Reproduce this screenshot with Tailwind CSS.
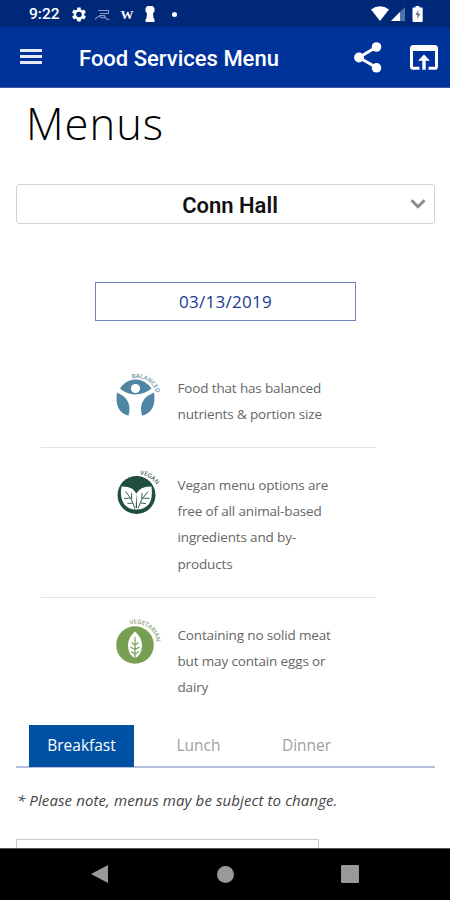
<!DOCTYPE html>
<html lang="en">
<head>
<meta charset="utf-8">
<title>Food Services Menu</title>
<script src="https://cdn.jsdelivr.net/npm/@tailwindcss/browser@4"></script>
</head>
<body class="bg-white">
<div class="w-[450px] h-[900px] flex flex-col overflow-hidden bg-white font-['Open_Sans',sans-serif]">
  <!-- status bar -->
  <div class="h-[27px] shrink-0 bg-[#002878] flex items-center text-white font-['Roboto',sans-serif] pl-[29px] pr-[27px]">
    <span class="w-[43px] text-[15.500px] font-medium leading-none mt-[3px]">9:22</span>
    <svg class="w-[14px] h-[15px] mt-px" viewBox="2 2 20 20" fill="#fff"><path d="M19.4 13c.04-.3.06-.6.06-1s-.02-.7-.07-1l2.1-1.6c.2-.15.24-.4.12-.62l-2-3.46c-.12-.22-.37-.3-.6-.22l-2.48 1c-.52-.4-1.08-.73-1.7-.98l-.37-2.65A.5.5 0 0 0 14 2h-4c-.24 0-.45.18-.5.42l-.37 2.65c-.6.25-1.17.6-1.7.98l-2.48-1c-.23-.08-.48 0-.6.22l-2 3.46c-.13.22-.08.47.1.62L4.6 11a8 8 0 0 0 0 2l-2.1 1.6c-.2.15-.25.4-.13.62l2 3.46c.12.22.38.3.6.22l2.5-1c.5.4 1.07.73 1.68.98l.38 2.65c.04.24.25.42.5.42h4c.25 0 .46-.18.5-.42l.36-2.65c.6-.25 1.18-.6 1.7-.98l2.48 1c.22.08.48 0 .6-.22l2-3.46c.12-.22.07-.47-.12-.62zM12 16a4 4 0 1 1 0-8 4 4 0 0 1 0 8z"/></svg>
    <svg class="w-4 h-3 ml-[9px] mt-0.5" viewBox="0 0 16 12" fill="none" stroke="#8d9cc1" stroke-width="1.1"><path d="M3 1.500h10.500v3H5M0 10.500c2-3 4-3.500 5.500-2.500s3 1.500 5-.5M9.500 6c0 3 1 4.500 5 4.500M4 6.500h5"/></svg>
    <span class="w-[14px] ml-[9px] text-center text-[13px] leading-none font-bold font-['Liberation_Serif',serif] mt-0.5">W</span>
    <svg class="w-[10px] h-4 ml-[11px] mt-px" viewBox="0 0 10 16" fill="#fff"><path d="M2.500 0h5L9.500 2v3.500L8 7.500l.5 4.500 1 1.500V16H.5v-2.500l1-1.500L2 7.500.5 5.500V2z"/></svg>
    <span class="w-[5px] h-[5px] ml-[17px] mt-px rounded-full bg-white"></span>
    <svg class="w-[18px] h-[15px] ml-auto" viewBox="0 0 18 15" fill="#fff"><path d="M0 3.500Q9-3 18 3.500L9 15z"/></svg>
    <svg class="w-[14px] h-[14px] ml-[2px] mt-px" viewBox="0 0 14 14"><path d="M14 0v14H0z" fill="#4d75a9"/><path d="M9 5v9H0z" fill="#fff"/></svg>
    <svg class="w-[11px] h-4 ml-[7px]" viewBox="0 0 11 16"><path d="M3.500 0h4v1.500H10a.7.700 0 0 1 .7.700V15a1 1 0 0 1-1 1H1.500a1 1 0 0 1-1-1V2.200a.7.700 0 0 1 .7-.7h2.300z" fill="#fff"/><path d="M6.500 4L3.300 9h2v4l3-5.200H6.300z" fill="#65738f"/></svg>
  </div>
  <!-- app bar -->
  <header class="h-[61px] shrink-0 bg-[#003399] border-b border-[#3a58a4] flex items-center pl-5 pr-3 text-white">
    <div class="w-[22px] h-[15px] flex flex-col justify-between -mt-px">
      <span class="h-[3px] bg-[#e6eaf8]"></span><span class="h-[3px] bg-[#e6eaf8]"></span><span class="h-[3px] bg-[#e6eaf8]"></span>
    </div>
    <h2 class="ml-[37px] mt-[3px] text-[22px] leading-none font-medium whitespace-nowrap font-['Roboto',sans-serif]">Food Services Menu</h2>
    <svg class="w-[28px] h-[31px] ml-auto mr-[28px]" viewBox="0 0 28 31" fill="#fff"><path d="M22.500 5L5 15.500l17.500 10" fill="none" stroke="#fff" stroke-width="3"/><circle cx="22.500" cy="5" r="4.800"/><circle cx="5" cy="15.500" r="4.900"/><circle cx="22.500" cy="25.800" r="4.800"/></svg>
    <svg class="w-[28px] h-[25px]" viewBox="0 0 28 25"><path d="M9.500 23.300H3a1.500 1.500 0 0 1-1.500-1.500V3A1.500 1.500 0 0 1 3 1.500h22A1.500 1.500 0 0 1 26.500 3v18.800a1.500 1.500 0 0 1-1.500 1.500h-6.500" fill="none" stroke="#fff" stroke-width="3"/><path d="M1.500 1.500h25v4.500h-25z" fill="#fff"/><path d="M14 9.500l6 6.300h-4.300v9h-3.400v-9H8z" fill="#fff"/></svg>
  </header>
  <!-- page content -->
  <main class="h-[760px] shrink-0 overflow-hidden px-4">
    <h1 class="ml-[10px] mt-[6px] h-[60px] leading-[60px] text-[43.500px] font-light tracking-[1px] text-black">Menus</h1>
    <div class="mt-[30px] w-[419px] h-10 border border-[#d2d2d2] rounded-[3px] flex items-center">
      <span class="w-10"></span>
      <span class="flex-1 text-center text-[22px] leading-none font-semibold text-[#111] font-['Roboto',sans-serif] ml-[13px] mt-[3px]">Conn Hall</span>
      <svg class="w-[16px] h-[10px] ml-5 mr-[8px] mb-px" viewBox="0 0 16 10" fill="none" stroke="#8c8c8c" stroke-width="3"><path d="M1.500 1.200L8 7.700l6.500-6.500"/></svg>
    </div>
    <div class="ml-[79px] mt-[58px] w-[261px] h-[39px] border-[1.500px] border-[#6f83bd] flex items-center justify-center text-[17px] tracking-[0.300px] text-[#173b91]">03/13/2019</div>
    <ul class="ml-[25px] w-[335px] mt-[54px] text-[13.500px] tracking-[-0.150px] leading-[26.200px] text-[#666]">
      <li class="flex h-[73px] border-b border-[#e2e2e2]">
        <svg class="w-[60px] h-[60px] ml-[64px] -mt-2 shrink-0" viewBox="105 367 60 60">
          <path d="M120 388.500Q126 379.500 135.500 379.500T151.500 388.500Q145 394 135.500 394.500Q126 394 120 388.500z" fill="#4f86a3"/>
          <g fill="#4f86a3"><path d="M117 392.500Q129.500 398 129.500 408Q129.500 412 128.500 415.800Q114 411.500 117 392.500zM154 392.500Q141 398 141 408Q141 412 142 415.800Q157 411.500 154 392.500z"/></g>
          <circle cx="135.500" cy="388.500" r="4.600" fill="#fff"/>
          <path id="arc1" d="M132 378.500A20 20 0 0 1 156.500 395" fill="none"/>
          <text class="font-['Open_Sans',sans-serif] tracking-normal" font-size="6" font-weight="600" fill="#6d8f9d"><textPath href="#arc1" textLength="31">BALANCED</textPath></text>
        </svg>
        <p class="ml-[12.500px] -mt-[0.500px] w-[170px]">Food that has balanced<br>nutrients &amp; portion size</p>
      </li>
      <li class="flex h-[150px] pt-[24px] border-b border-[#e2e2e2]">
        <svg class="w-[60px] h-[60px] ml-[64px] -mt-2 shrink-0" viewBox="105 464 60 60">
          <circle cx="136.500" cy="495" r="19" fill="#214f3e"/>
          <path d="M121.500 486.500Q133 486 136.300 493.500Q140.500 486 151.500 486.500Q153 498 149 504Q144.500 509.500 136.500 509.500Q128 509.500 124 504Q119.500 497 121.500 486.500z" fill="#fff"/>
          <g fill="none" stroke="#214f3e" stroke-width=".9"><path d="M125.500 491.500Q132 498 135 508.500M148 491.500Q141 498 138 508.500M124 498.500l6.500-.5M127.500 503.500l5.500-.5M131.500 493l.2 6M149.500 498.500l-6.500-.5M146 503.500l-5.500-.5M142 493l-.2 6"/></g>
          <path d="M136.300 493l.8 15h-1.400z" fill="#214f3e"/>
          <path id="arc2" d="M140 474.500A21 21 0 0 1 159 493" fill="none"/>
          <text class="font-['Open_Sans',sans-serif] tracking-normal" font-size="6" font-weight="600" fill="#4d6259"><textPath href="#arc2" textLength="20">VEGAN</textPath></text>
        </svg>
        <p class="ml-[12.500px] w-[170px]">Vegan menu options are<br>free of all animal-based<br>ingredients and by-<br>products</p>
      </li>
      <li class="flex h-[127px] pt-[24px]">
        <svg class="w-[60px] h-[60px] ml-[64px] -mt-2 shrink-0" viewBox="105 614 60 60">
          <circle cx="135" cy="645" r="18.800" fill="#779f54"/>
          <path d="M135 631.500Q142 637 142 646Q141.500 655 135 658.500Q128.500 655 128 646Q128 637 135 631.500z" fill="#fff"/>
          <path d="M135 637v21.500M135 645l-3.500-2.500M135 645l3.500-2.500M135 649.500l-4.500-2.500M135 649.500l4.500-2.500M135 654l-4-2.500M135 654l4-2.500" stroke="#779f54" stroke-width="1.200" fill="none"/>
          <path id="arc3" d="M130 624.500A21 21 0 0 1 156.500 648" fill="none"/>
          <text class="font-['Open_Sans',sans-serif] tracking-normal" font-size="6" font-weight="600" fill="#8b9e75"><textPath href="#arc3" textLength="36">VEGETARIAN</textPath></text>
        </svg>
        <p class="ml-[12.500px] w-[170px]">Containing no solid meat<br>but may contain eggs or<br>dairy</p>
      </li>
    </ul>
    <nav class="w-[419px] h-[43px] border-b-2 border-[#b5bfdc] pl-[13px] flex text-[15.500px] leading-[41px] text-[#a0a0a0]">
      <span class="w-[105px] h-[42px] bg-[#0050a4] text-white text-center">Breakfast</span>
      <span class="w-[129px] text-center">Lunch</span>
      <span class="w-[87px] text-center">Dinner</span>
    </nav>
    <p class="mt-5 ml-px h-6 leading-6 text-[15px] tracking-[0.110px] italic whitespace-nowrap text-[#444]">* Please note, menus may be subject to change.</p>
    <div class="mt-[27px] w-[303px] h-10 border border-[#c9c9c9]"></div>
  </main>
  <!-- navigation bar -->
  <footer class="h-[52px] shrink-0 bg-black border-t border-[#555] flex items-center">
    <svg class="w-[17px] h-[18px] ml-[91px] -mt-px" viewBox="0 0 17 18"><path d="M17 0v18L0 9z" fill="#999"/></svg>
    <span class="w-[17px] h-[17px] ml-[109px] -mt-px rounded-full bg-[#999]"></span>
    <span class="w-[18px] h-[18px] ml-[107px] -mt-px rounded-[1px] bg-[#999]"></span>
  </footer>
</div>
</body>
</html>
